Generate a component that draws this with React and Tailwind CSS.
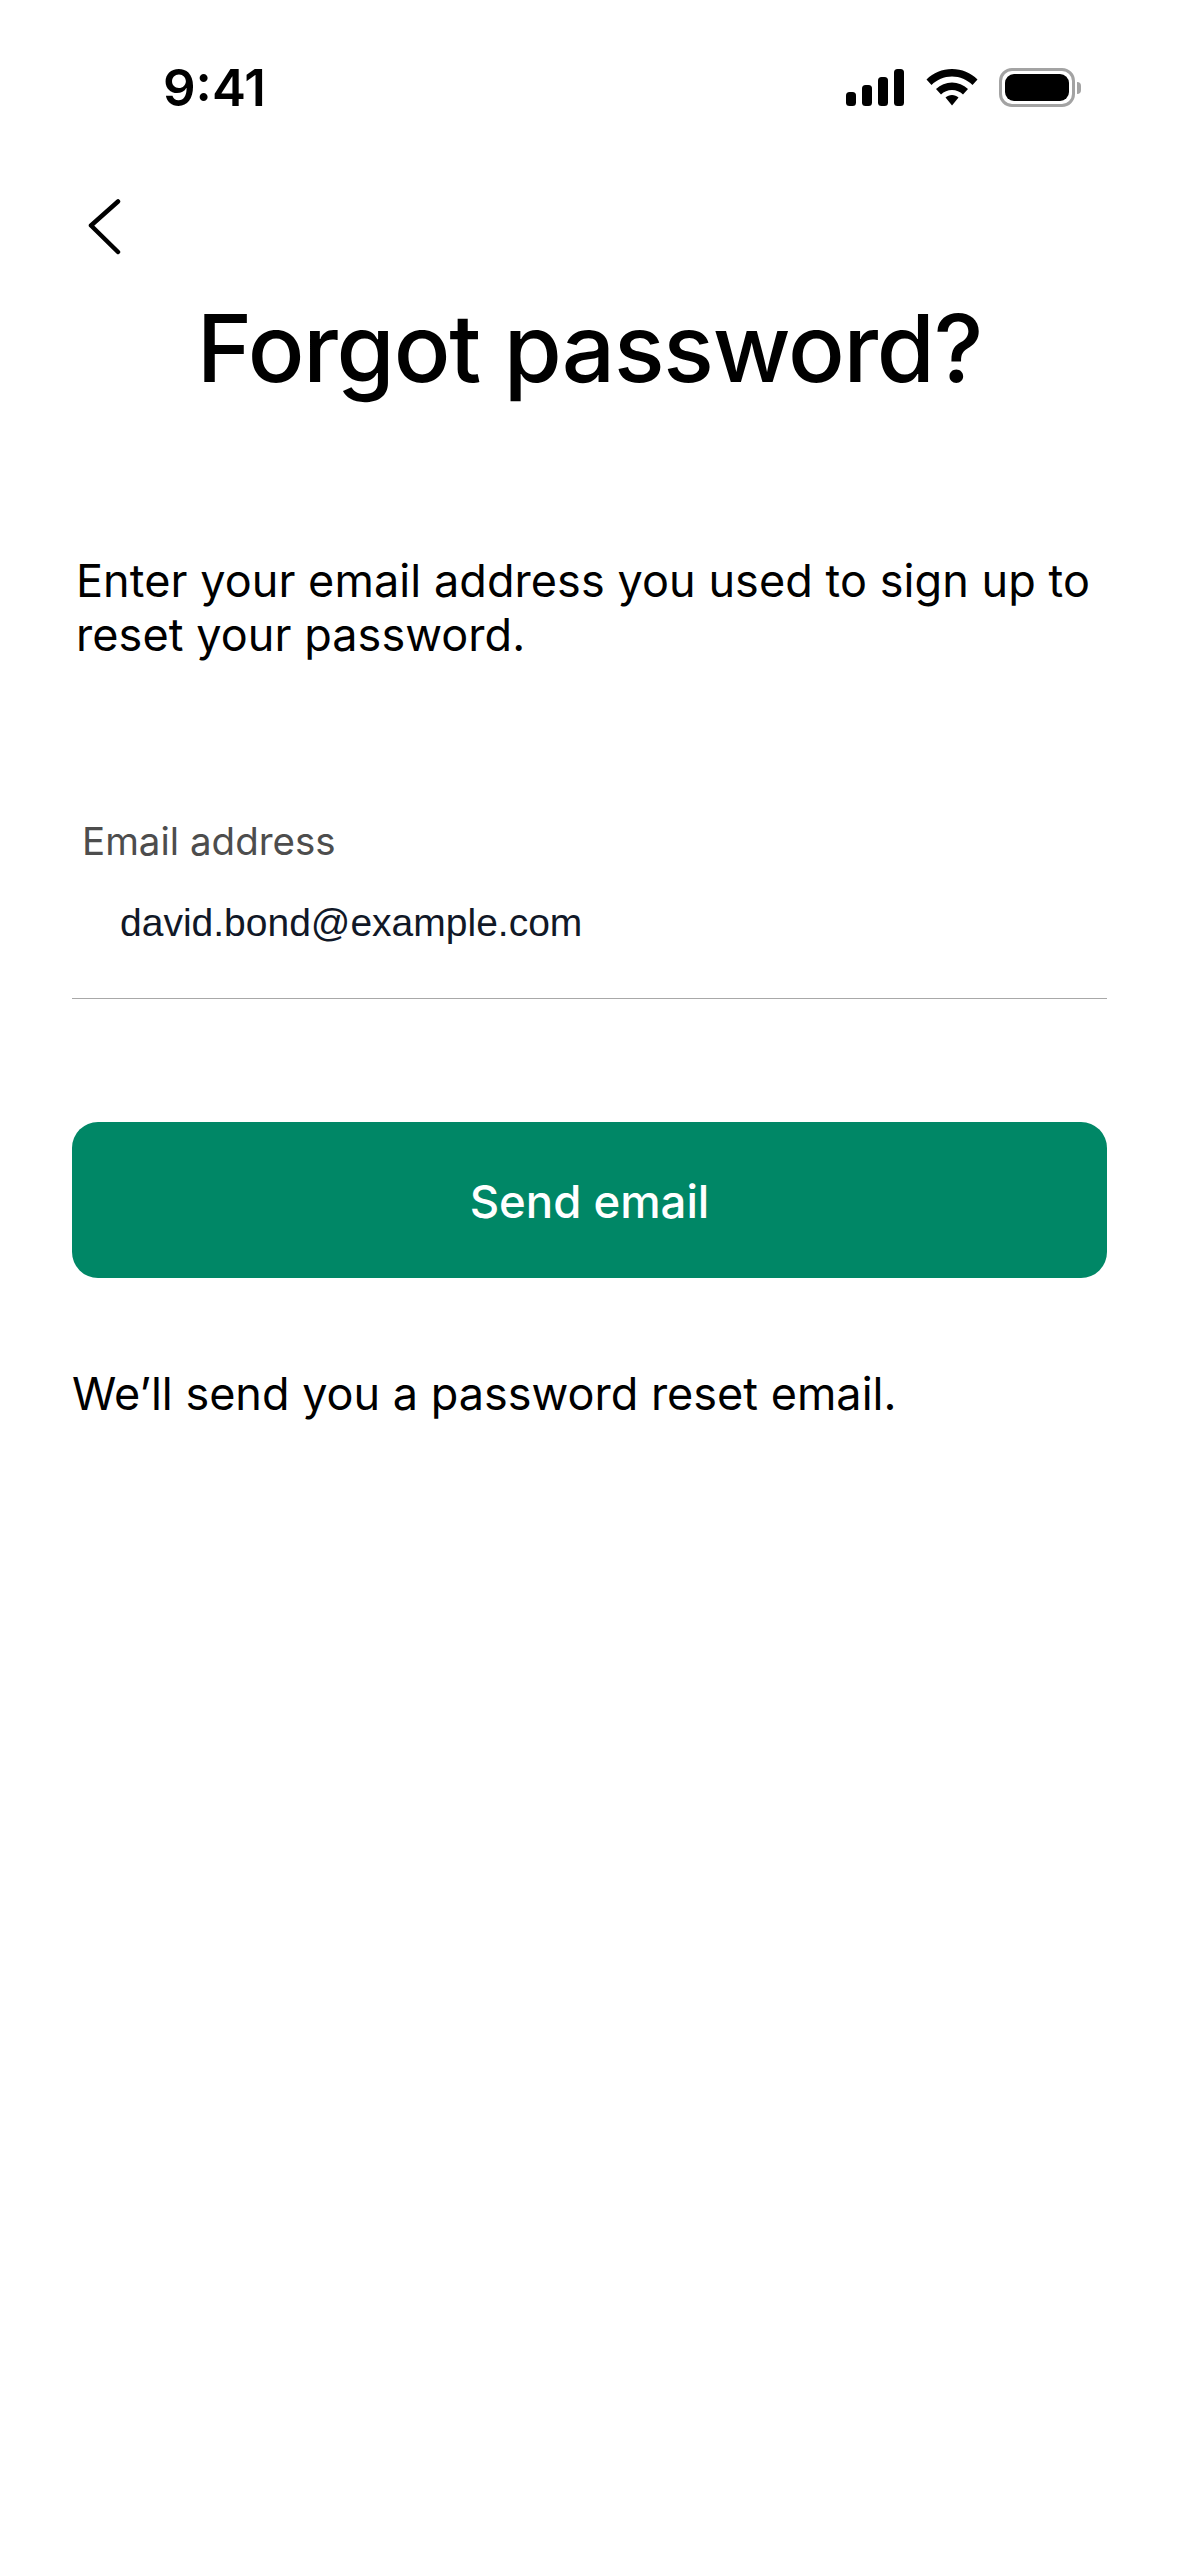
export default function App() {
  const inter = "font-['Inter',sans-serif]";
  return (
    <div className={`w-[1179px] h-[2556px] bg-white overflow-hidden text-black ${inter}`}>
      <div className="flex items-center justify-between h-[85px] mt-[45px] pl-[163px] pr-[98px]">
        <span className="text-[51px] leading-[60px] font-semibold">9:41</span>
        <div className="flex items-center gap-[10px]">
          <svg width="58" height="37" viewBox="0 0 58 37" fill="black">
            <rect x="0" y="23" width="10" height="14" rx="3.5" />
            <rect x="16" y="16" width="10" height="21" rx="3.5" />
            <rect x="32" y="8" width="10" height="29" rx="3.5" />
            <rect x="48" y="0" width="10" height="37" rx="3.5" />
          </svg>
          <svg width="52" height="37" viewBox="0 0 52 37" fill="black" className="ml-[12px]">
            <path d="M26 0C16 0 7.5 3.8 0.5 10.5L5.5 16C11 10.8 18 7.6 26 7.6C34 7.6 41 10.8 46.5 16L51.5 10.5C44.500 3.8 36 0 26 0Z" />
            <path d="M26 13.5C20 13.500 14.500 15.800 10 20L15 25.500C18 22.700 21.800 21 26 21C30.200 21 34 22.700 37 25.500L42 20C37.500 15.800 32 13.500 26 13.500Z" />
            <path d="M26 26C23.500 26 21.300 27 19.500 28.600L26 36.500L32.500 28.600C30.700 27 28.500 26 26 26Z" />
          </svg>
          <div className="flex items-center ml-[11px]">
            <div className="w-[76px] h-[39px] rounded-[13px] border-[3px] border-[#a3a3a3] p-[3px] flex">
              <div className="flex-1 bg-black rounded-[9px]" />
            </div>
            <div className="w-[4px] h-[12px] bg-[#a3a3a3] rounded-r-[4px] ml-[2px]" />
          </div>
        </div>
      </div>

      <div className="pl-[88px] mt-[69px] h-[56px]">
        <svg width="34" height="56" viewBox="0 0 34 56" fill="none" stroke="black" strokeWidth="4.5" strokeLinecap="round" strokeLinejoin="round">
          <path d="M30 2.500L3 26.500L30 53" />
        </svg>
      </div>

      <h1 className="mt-[37px] text-center text-[94px] leading-[112px] font-medium tracking-[-1.2px]">Forgot password?</h1>

      <div className="px-[72px]">
        <p className="mt-[150px] pl-[4px] text-[45px] leading-[54px] tracking-[0.07px] text-black">
          Enter your email address you used to sign up to<br />reset your password.
        </p>

        <div className="mt-[155px] border-b-[1px] border-[#a8a8a8] pb-[52px]">
          <div className="pl-[10px] text-[38.5px] leading-[48px] text-[#4d4d4d]">Email address</div>
          <div className="pl-[48px] mt-[35px] font-['Liberation_Sans',sans-serif] text-[39px] leading-[46px] text-[#111827]">david.bond@example.com</div>
        </div>

        <button className="mt-[123px] w-full h-[156px] pt-[5px] rounded-[26px] bg-[#008766] text-white text-[45.500px] font-medium flex items-center justify-center">Send email</button>

        <p className="mt-[89px] text-[45px] leading-[54px] text-black">We’ll send you a password reset email.</p>
      </div>
    </div>
  );
}
